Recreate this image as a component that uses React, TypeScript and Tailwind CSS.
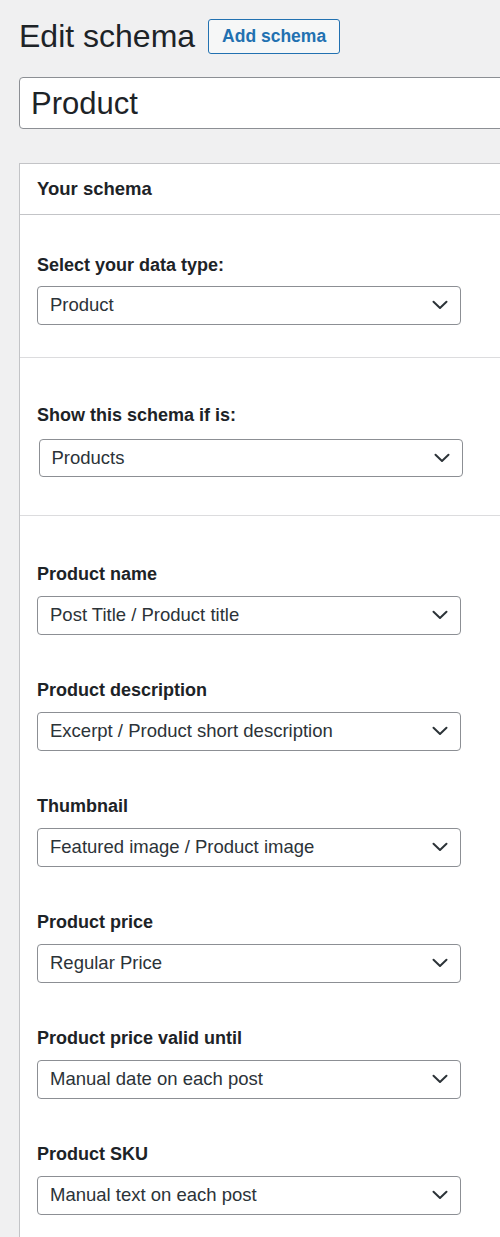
import React from "react"

const font = { fontFamily: '"Liberation Sans", Arial, sans-serif' }

function Chevron() {
  return (
    <svg width="16" height="10" viewBox="0 0 16 10" fill="none" className="shrink-0">
      <path d="M1.5 1.8 L8 8 L14.5 1.8" stroke="#2c3338" strokeWidth="2" strokeLinecap="round" strokeLinejoin="round" />
    </svg>
  )
}

function FakeSelect({ value, className = "" }: { value: string; className?: string }) {
  return (
    <div
      className={`flex h-[38.5px] w-[424px] items-center justify-between rounded-[4px] border border-[#8c8f94] bg-white pl-[12px] pr-[12px] ${className}`}
    >
      <span className="text-[18.5px] leading-none text-[#2c3338]">{value}</span>
      <Chevron />
    </div>
  )
}

const fields = [
  { label: "Product name", value: "Post Title / Product title" },
  { label: "Product description", value: "Excerpt / Product short description" },
  { label: "Thumbnail", value: "Featured image / Product image" },
  { label: "Product price", value: "Regular Price" },
  { label: "Product price valid until", value: "Manual date on each post" },
  { label: "Product SKU", value: "Manual text on each post" },
]

export default function App() {
  return (
    <div className="h-[1237px] w-[500px] overflow-hidden bg-[#f0f0f1] text-[#1d2327]" style={font}>
      <div className="w-[560px] pl-[19px]">
        {/* title row */}
        <div className="flex items-center pt-[19px]">
          <h1 className="text-[32px] leading-[35px] font-normal text-[#1d2327]">Edit schema</h1>
          <button className="ml-[13px] h-[35px] rounded-[3px] border border-[#2271b1] bg-[#f6f7f7] px-[13px] text-[17.5px] font-bold text-[#2271b1]">
            Add schema
          </button>
        </div>

        {/* title input */}
        <div className="mt-[23px] flex h-[52px] items-center rounded-[4px] border border-[#8c8f94] bg-white pl-[11px]">
          <span className="text-[31px] leading-none text-[#1d2327]">Product</span>
        </div>

        {/* panel */}
        <div className="mt-[34px] border border-[#c3c4c7] bg-white">
          <div className="flex h-[51px] items-center border-b border-[#c3c4c7] pl-[17px]">
            <h2 className="text-[18.5px] font-bold">Your schema</h2>
          </div>

          <div className="border-b border-[#dcdcde] pb-[32px] pl-[17px] pt-[39px]">
            <label className="block text-[18px] leading-[23px] font-bold">Select your data type:</label>
            <FakeSelect value="Product" className="mt-[9px]" />
          </div>

          <div className="border-b border-[#dcdcde] pb-[38px] pl-[17px] pt-[46px]">
            <label className="block text-[18px] leading-[23px] font-bold">Show this schema if is:</label>
            <FakeSelect value="Products" className="ml-[1.5px] mt-[12px]" />
          </div>

          <div className="flex flex-col gap-[44.5px] pb-[40px] pl-[17px] pt-[47px]">
            {fields.map((f) => (
              <div key={f.label}>
                <label className="block text-[18px] leading-[23px] font-bold">{f.label}</label>
                <FakeSelect value={f.value} className="mt-[10px]" />
              </div>
            ))}
          </div>
        </div>
      </div>
    </div>
  )
}
